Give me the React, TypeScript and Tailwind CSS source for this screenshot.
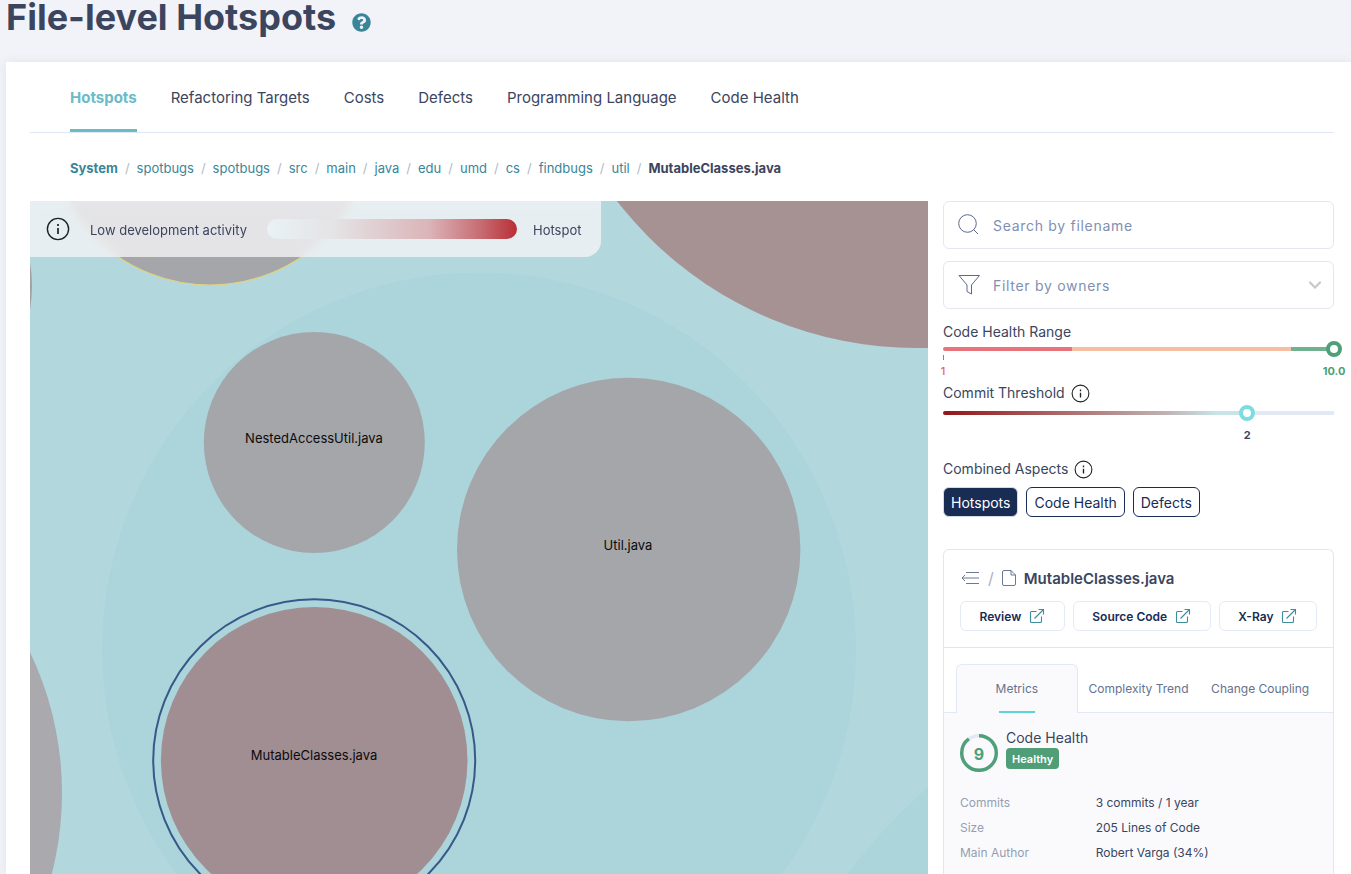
import { useState } from "react";
import { FaQuestionCircle } from "react-icons/fa";

const tabs = ["Hotspots", "Refactoring Targets", "Costs", "Defects", "Programming Language", "Code Health"];
const crumbs = ["System", "spotbugs", "spotbugs", "src", "main", "java", "edu", "umd", "cs", "findbugs", "util"];
const aspects = ["Hotspots", "Code Health", "Defects"];
const links = ["Review", "Source Code", "X-Ray"];
const detailTabs = ["Metrics", "Complexity Trend", "Change Coupling"];
const metrics = [
  ["Commits", "3 commits / 1 year"],
  ["Size", "205 Lines of Code"],
  ["Main Author", "Robert Varga (34%)"],
];

function InfoIcon({ className }: { className: string }) {
  return (
    <svg viewBox="0 0 24 24" className={className} fill="none" stroke="#1f2225" strokeWidth="1.4" aria-hidden="true">
      <circle cx="12" cy="12" r="10.6" />
      <path d="M12 11v6M12 7v2" strokeWidth="1.7" />
    </svg>
  );
}

function SearchIcon() {
  return (
    <svg viewBox="0 0 22 22" className="size-[22px] shrink-0" fill="none" stroke="#5a6a8c" aria-hidden="true">
      <circle cx="9.5" cy="9.5" r="8.8" />
      <path d="M15.5 15.5l4.5 4.5" />
    </svg>
  );
}

function FilterIcon() {
  return (
    <svg viewBox="0 0 22 22" className="size-[22px] shrink-0" fill="none" stroke="#5a6a8c" strokeLinejoin="round" aria-hidden="true">
      <path d="M1 1.5h20.5l-8 9.5v9l-4.5-2.5v-6.5z" />
    </svg>
  );
}

function BackIcon() {
  return (
    <svg viewBox="0 0 20 16" className="h-4 w-5" fill="none" stroke="#6b7896" aria-hidden="true">
      <path d="M6 2.5h13M2 8h17M6 13.5h13M5 5L2 8l3 3" />
    </svg>
  );
}

function FileIcon() {
  return (
    <svg viewBox="0 0 14 16" className="h-4 w-3.5" fill="none" stroke="#6b7896" strokeLinejoin="round" aria-hidden="true">
      <path d="M2 .5h7l4.5 4.5v9a1.5 1.5 0 0 1-1.5 1.5H2A1.5 1.5 0 0 1 .5 14V2A1.5 1.5 0 0 1 2 .5zM9 .5V5h4.5" />
    </svg>
  );
}

function ExternalIcon() {
  return (
    <svg viewBox="0 0 16 16" className="size-4" fill="none" stroke="#3f8c9c" strokeWidth="1.1" aria-hidden="true">
      <path d="M7.5 3.5H2.5a1 1 0 0 0-1 1v9a1 1 0 0 0 1 1h9a1 1 0 0 0 1-1V8.5M9.5 1.5h5V6.5M14.5 1.5L5.5 10.5" />
    </svg>
  );
}

function BubbleMap() {
  return (
    <svg
      viewBox="0 0 898 673"
      preserveAspectRatio="xMinYMin slice"
      className="absolute inset-0 size-full"
      role="img"
      aria-label="Hotspot map"
    >
      <rect width="898" height="673" fill="#b2d8de" />
      <circle cx="449" cy="448.5" r="377" fill="#abd5db" />
      <circle cx="1294" cy="1034" r="598" fill="#abd5db" />
      <circle cx="180" cy="-79.5" r="163.5" fill="#a5a6aa" stroke="#e3d27c" strokeWidth="1.2" />
      <circle cx="-143" cy="85" r="145" fill="#a3a0a5" />
      <circle cx="-294" cy="592" r="326" fill="#a9a9ae" />
      <circle cx="887" cy="-232.5" r="379.6" fill="#a69193" />
      <circle cx="284.3" cy="241.5" r="110.5" fill="#a4a6aa" />
      <circle cx="598.7" cy="348.5" r="171.7" fill="#a4a6aa" />
      <circle cx="284.2" cy="559.3" r="153.3" fill="#a18e92" />
      <circle cx="284.2" cy="559.3" r="161" fill="none" stroke="#365989" strokeWidth="2" />
      <g className="text-[13px]" fill="#0b0b0c" textAnchor="middle">
        <text x="284" y="242">NestedAccessUtil.java</text>
        <text x="598" y="349">Util.java</text>
        <text x="284" y="559">MutableClasses.java</text>
      </g>
    </svg>
  );
}

function Legend() {
  return (
    <div className="absolute top-0 left-0 flex h-14 items-center rounded-br-2xl bg-[#f4f4f6]/80 pr-5 pl-4 text-[13px] backdrop-blur-xs">
      <InfoIcon className="size-6" />
      <span className="ml-5 pt-0.5">Low development activity</span>
      <span className="ml-5 h-5 w-[250px] rounded-full bg-[linear-gradient(90deg,#e9f2f5_0%,#e4e2e4_28%,#dbb4b8_65%,#c66a70_86%,#b92f36_100%)]" />
      <span className="ml-4 pt-0.5">Hotspot</span>
    </div>
  );
}

const thumb =
  "-mx-2 h-4 min-w-0 flex-1 cursor-pointer appearance-none bg-transparent [&::-webkit-slider-thumb]:size-4 [&::-webkit-slider-thumb]:appearance-none [&::-webkit-slider-thumb]:rounded-full [&::-webkit-slider-thumb]:border-4 [&::-webkit-slider-thumb]:bg-white";

function Filters() {
  const [aspect, setAspect] = useState("Hotspots");
  return (
    <div>
      <div className="flex flex-col gap-3">
        <label className="flex h-12 items-center gap-[13px] rounded-md border border-[#e4e7f1] px-[14px]">
          <SearchIcon />
          <input
            type="text"
            aria-label="Search by filename"
            placeholder="Search by filename"
            className="min-w-0 flex-1 pt-0.5 tracking-wider outline-none placeholder:text-[#8090b2]"
          />
        </label>
        <label className="flex h-12 items-center gap-[13px] rounded-md border border-[#e4e7f1] pr-3 pl-[14px]">
          <FilterIcon />
          <select aria-label="Filter by owners" className="min-w-0 flex-1 appearance-none pt-0.5 tracking-wider text-[#8090b2] outline-none">
            <option>Filter by owners</option>
          </select>
          <svg viewBox="0 0 12 8" className="h-2 w-3" fill="none" stroke="#c8c8c8" strokeWidth="2.2" strokeLinecap="round" aria-hidden="true">
            <path d="M1 1.5l5 5 5-5" />
          </svg>
        </label>
      </div>

      <div className="mt-[14px]">
        <label htmlFor="health" className="block leading-[18px]">Code Health Range</label>
        <div className="mt-[6px] flex h-1 items-center rounded-l-sm bg-[linear-gradient(90deg,#e8737b_33%,#f7bea4_33%,#f7bea4_89%,#70b18f_89%)]">
          <input id="health" type="range" min={1} max={10} defaultValue={10} className={`${thumb} [&::-webkit-slider-thumb]:border-[#4f9f78]`} />
        </div>
        <div className="mt-1 h-[5px] w-px bg-[#dd5f69]" />
        <div className="mt-1 flex h-4 items-center justify-between text-[11px] font-bold">
          <span className="flex w-0 justify-center font-medium text-[#e35f6d]">1</span>
          <span className="flex w-0 justify-center text-[#4f9f78]">10.0</span>
        </div>
      </div>

      <div className="mt-1">
        <div className="flex h-[18px] items-center gap-[6px]">
          <label htmlFor="commits">Commit Threshold</label>
          <InfoIcon className="size-[19px]" />
        </div>
        <div className="mt-[9px] flex h-1 items-center rounded-l-sm bg-[linear-gradient(90deg,#931518_0%,#b07676_35%,#bfb3b2_57%,#c8e4e7_70%,#c8e4e7_77%,#e2e9f4_77%)]">
          <input id="commits" type="range" min={0} max={9} defaultValue={7} aria-valuetext="2" className={`${thumb} [&::-webkit-slider-thumb]:border-[#7cdde0]`} />
        </div>
        <div className="mt-[13px] flex h-4 items-center text-[11px] font-bold">
          <span className="w-7/9" />
          <span className="flex w-0 justify-center">2</span>
        </div>
      </div>

      <fieldset className="mt-[15px]">
        <legend className="flex h-5 items-center gap-[6px]">
          Combined Aspects
          <InfoIcon className="size-[19px]" />
        </legend>
        <div className="mt-2 flex gap-2">
          {aspects.map((name) => (
            <button
              key={name}
              type="button"
              aria-pressed={aspect === name}
              onClick={() => setAspect(name)}
              className={`h-[30px] rounded-md border px-[7px] pt-0.5 ${
                aspect === name ? "border-[#d5dbe6] bg-[#182c54] text-white" : "border-[#182c54] bg-white text-[#182c54]"
              }`}
            >
              {name}
            </button>
          ))}
        </div>
      </fieldset>
    </div>
  );
}

function Details() {
  const [active, setActive] = useState("Metrics");
  return (
    <section className="mt-8 flex flex-1 flex-col rounded-t-md border border-b-0 border-[#e2e6f0]">
      <div className="border-b border-[#e2e6f0] px-4 pt-4 pb-4">
        <div className="flex h-6 items-center gap-2">
          <button type="button" aria-label="Back">
            <BackIcon />
          </button>
          <span className="text-base text-[#a9b1c2]">/</span>
          <FileIcon />
          <h2 className="pt-0.5 text-[15px] font-semibold">MutableClasses.java</h2>
        </div>
        <div className="mt-[11px] flex gap-2 text-xs font-semibold text-[#182c54]">
          {links.map((name) => (
            <a key={name} href="#" className="flex h-[30px] flex-auto items-center justify-center gap-2 rounded-md border border-[#e4eaf5]">
              <span className="pt-0.5">{name}</span>
              <ExternalIcon />
            </a>
          ))}
        </div>
      </div>

      <div className="relative mt-4 grid grid-cols-3 px-3 text-xs text-[#66728c]">
        <div className="absolute inset-x-0 bottom-0 h-px bg-[#e2e8f4]" />
        {detailTabs.map((name) => (
          <button
            key={name}
            type="button"
            onClick={() => setActive(name)}
            className={`relative flex h-[49px] items-center justify-center rounded-t-md whitespace-nowrap ${
              active === name ? "border border-b-0 border-[#e2e8f4] bg-[#fafafd]" : ""
            }`}
          >
            {name}
            {active === name && <span className="absolute bottom-0 h-0.5 w-9 bg-[#5bd3d8]" />}
          </button>
        ))}
      </div>

      <div className="flex-1 bg-[#fafafd] px-4 pt-4">
        <div className="flex gap-2">
          <div className="mt-[5px] grid size-[38px] place-items-center">
            <svg viewBox="0 0 38 38" className="col-start-1 row-start-1 size-[38px]" fill="none" strokeWidth="3.4" aria-hidden="true">
              <circle cx="19" cy="19" r="17.3" stroke="#e2e9f4" />
              <circle cx="19" cy="19" r="17.3" stroke="#4f9f78" pathLength="100" strokeDasharray="90 10" strokeLinecap="butt" transform="rotate(-90 19 19)" />
            </svg>
            <span className="col-start-1 row-start-1 pt-0.5 text-base font-bold text-[#4f9f78]">9</span>
          </div>
          <div>
            <div className="leading-[18px]">Code Health</div>
            <span className="mt-px inline-flex h-[21px] items-center rounded bg-[#509e78] px-1.5 pt-0.5 text-[11px] font-semibold text-white">Healthy</span>
          </div>
        </div>
        <table className="mt-[18px] w-full text-left text-xs">
          <tbody>
            {metrics.map(([name, value]) => (
              <tr key={name} className="h-[25px]">
                <th className="w-[38%] p-0 font-normal text-[#939fb3]">{name}</th>
                <td className="p-0">{value}</td>
              </tr>
            ))}
          </tbody>
        </table>
      </div>
    </section>
  );
}

export default function App() {
  const [active, setActive] = useState("Hotspots");
  return (
    <div className="flex min-h-screen flex-col overflow-x-hidden bg-[#f2f3f8] pl-1.5 font-['Inter',sans-serif] text-sm text-[#3b455e]">
      <header className="flex h-[62px] items-start gap-4">
        <h1 className="text-4xl leading-[34px] font-bold">File-level Hotspots</h1>
        <button type="button" aria-label="Help" className="mt-[13px]">
          <FaQuestionCircle className="size-[19px] text-[#39869a]" />
        </button>
      </header>

      <main className="flex flex-1 flex-col bg-white pr-[17px] pl-6 shadow-[0_0_10px_rgba(40,50,90,0.08)]">
        <nav className="flex h-[71px] gap-[34px] border-b border-[#e1e6f4] pl-10 text-[15px]">
          {tabs.map((name) => (
            <button
              key={name}
              type="button"
              onClick={() => setActive(name)}
              className={`border-b-3 pt-1 ${active === name ? "border-[#6bbbc6] font-bold text-[#6bbbc6]" : "border-transparent"}`}
            >
              {name}
            </button>
          ))}
        </nav>

        <nav aria-label="Breadcrumb" className="flex h-[68px] items-center gap-[7px] pt-0.5 pl-10 text-[13px]">
          {crumbs.map((name, i) => (
            <span key={i} className="flex gap-[7px]">
              <a href="#" className={`text-[#39869a] ${i === 0 ? "font-bold" : ""}`}>{name}</a>
              <span className="text-[#b3bac9]">/</span>
            </span>
          ))}
          <span className="font-bold">MutableClasses.java</span>
        </nav>

        <div className="flex flex-1 gap-[15px]">
          <div className="relative flex-1 overflow-hidden">
            <BubbleMap />
            <Legend />
          </div>
          <aside className="flex w-[391px] flex-col">
            <Filters />
            <Details />
          </aside>
        </div>
      </main>
    </div>
  );
}
